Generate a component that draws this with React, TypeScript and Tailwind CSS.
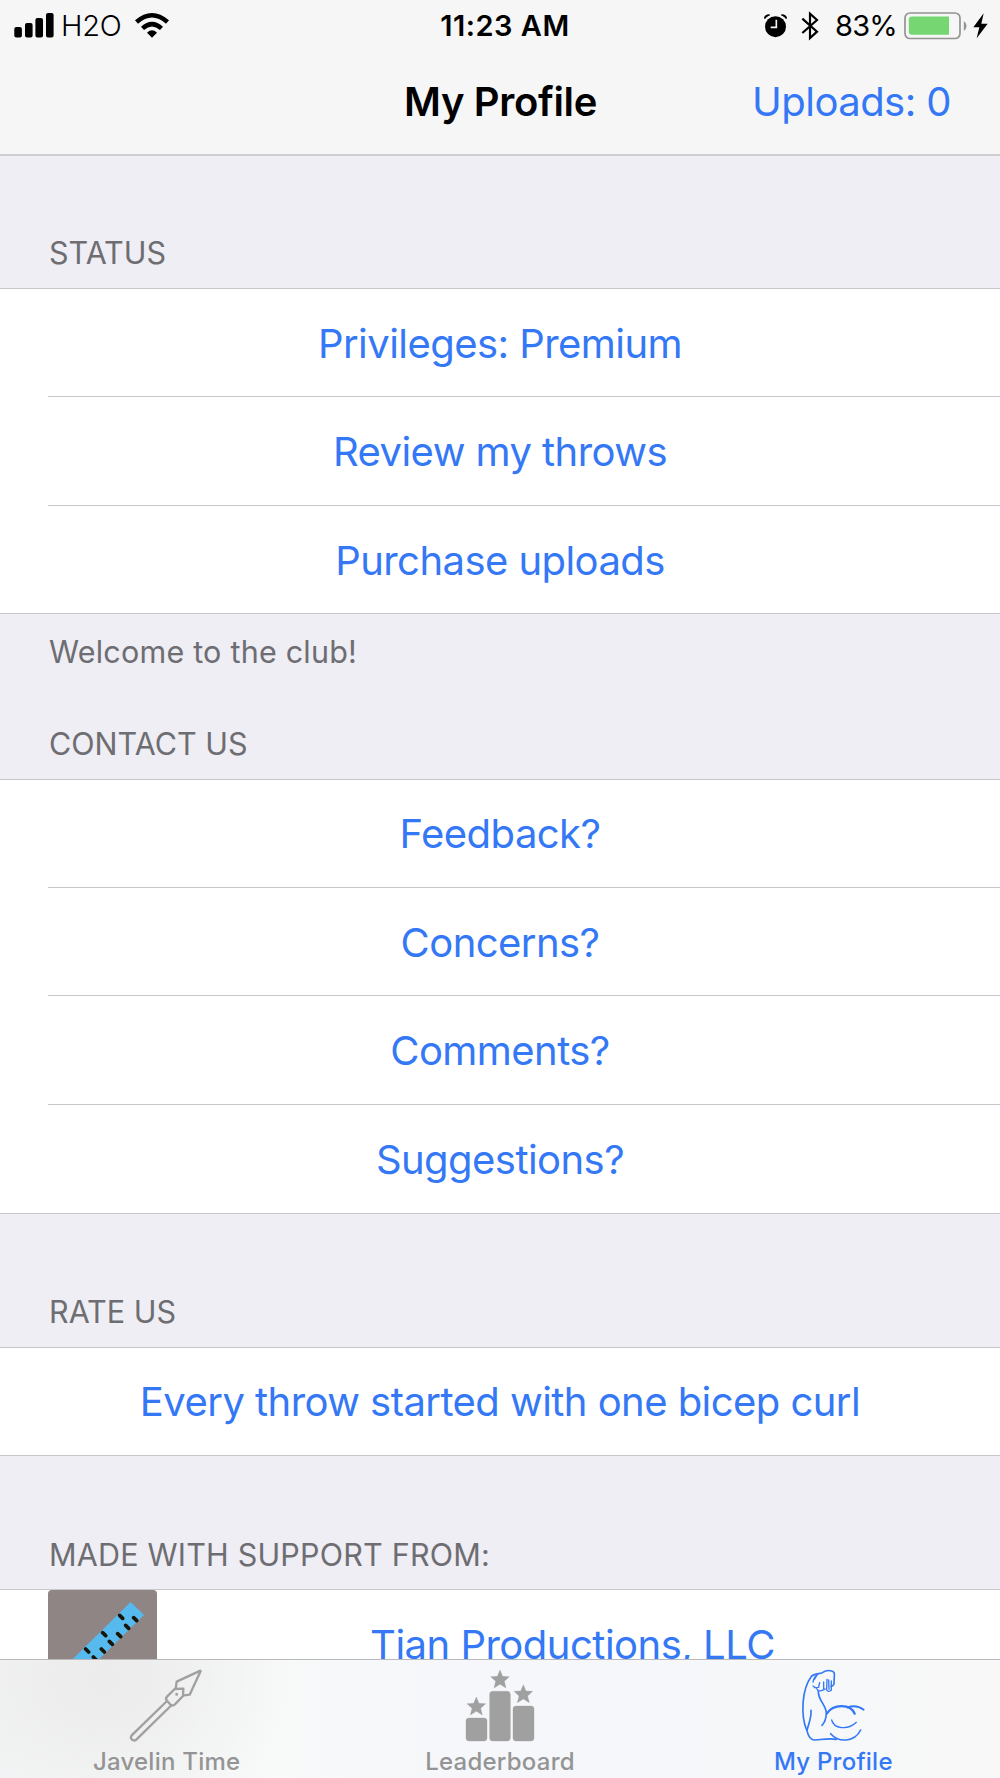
import { ReactNode } from 'react';
import { clsx } from 'clsx';

interface SectionProps {
  title: string;
  className?: string;
  footer?: string;
  children: ReactNode;
}

const Section = ({ title, className, footer, children }: SectionProps) => (
  <section>
    <h2
      className={clsx(
        'flex items-end pl-[49px] text-[30.5px] leading-10 text-[#6d6d72]',
        className,
      )}
    >
      {title}
    </h2>
    <ul className="border-y border-[#c8c7cc] bg-white">{children}</ul>
    {footer && (
      <p className="h-[76px] pl-[49px] pt-[18px] text-[30.5px] leading-10 tracking-[0.22px] text-[#6d6d72]">
        {footer}
      </p>
    )}
  </section>
);

const Row = ({ label, className }: { label: string; className?: string }) => (
  <li className="group pl-12">
    <button
      type="button"
      className={clsx(
        'flex w-full items-center justify-center border-[#c8c7cc] pr-12 text-[40px] tracking-[-0.55px] text-[#3478f6] group-not-last:border-b',
        className,
      )}
    >
      {label}
    </button>
  </li>
);

const SignalIcon = () => (
  <svg className="h-[25px] w-10" viewBox="0 0 40 25">
    <rect x="0.3" y="14" width="7.6" height="10.5" rx="2" />
    <rect x="11" y="10" width="7.6" height="14.5" rx="2" />
    <rect x="21.4" y="5" width="7.6" height="19.5" rx="2" />
    <rect x="32" y="0" width="7.6" height="24.5" rx="2" />
  </svg>
);

const WifiIcon = () => (
  <svg className="h-[25px] w-[34px]" viewBox="0 0 102 75">
    <path d="M0 22 Q51 -22 102 22 L93 32 Q51 -5 9 32 Z" />
    <path d="M18 41 Q51 11 84 41 L75 51 Q51 30 27 51 Z" />
    <path d="M36 59 Q51 45 66 59 L51 74 Z" />
  </svg>
);

const AlarmIcon = () => (
  <svg className="h-6 w-[23px]" viewBox="0 0 69 72">
    <circle cx="34.5" cy="38" r="31.5" />
    <path d="M2 14 Q4 2 17 3" fill="none" stroke="#000" strokeWidth="5" />
    <path d="M67 14 Q65 2 52 3" fill="none" stroke="#000" strokeWidth="5" />
    <path d="M2 14 Q4 2 17 3 Z M67 14 Q65 2 52 3 Z" />
    <path d="M37 17 V40 H20" fill="none" stroke="#f6f6f6" strokeWidth="5" />
  </svg>
);

const BluetoothIcon = () => (
  <svg className="h-[30px] w-[18px]" viewBox="0 0 54 90">
    <path
      d="M4 23 L48 62 L27 81 V8 L48 27 L4 66"
      fill="none"
      stroke="#000"
      strokeWidth="6.5"
    />
  </svg>
);

const BatteryIcon = () => (
  <svg className="h-[28px] w-[64px]" viewBox="0 0 64 28">
    <rect x="1" y="1" width="55" height="25.5" rx="5" fill="none" stroke="#939393" strokeWidth="1.7" />
    <path d="M8 4.6 H45 V22.8 H8 Q4.8 22.8 4.8 19.6 V7.8 Q4.8 4.6 8 4.6 Z" fill="#76d672" />
    <path d="M59.8 9 Q62.6 11 62.6 14 T59.8 19 Z" fill="#939393" />
  </svg>
);

const BoltIcon = () => (
  <svg className="h-[26px] w-[15px]" viewBox="0 0 45 78">
    <path d="M32 1 L1 43 H19 L11 76 L44 32 H25 Z" />
  </svg>
);

const JavelinIcon = () => (
  <svg
    className="h-[82px] w-20"
    viewBox="80 30 240 246"
    fill="none"
    stroke="#a0a0a0"
    strokeWidth="7"
    strokeLinejoin="round"
  >
    <path d="M302 61 L229 95 L226 117 M302 61 L268 134 L246 137" />
    <path d="M223 117 L249 116 L248 138 L223 164 Q215 170 208 161 L200 152 Q194 146 200 140 Z" />
    <path d="M200 153 L94 256 Q89 263 95 269 Q103 275 111 266 L214 165" />
    <circle cx="229" cy="133" r="2" strokeWidth="5" />
  </svg>
);

const STAR =
  'M0 -28 L8 -9 L28 -8 L13 6 L18 26 L0 15 L-18 26 L-13 6 L-28 -8 L-8 -9 Z';

const LeaderboardIcon = () => (
  <svg
    className="h-[82px] w-20"
    viewBox="120 30 240 246"
    fill="#a0a0a0"
    stroke="#a0a0a0"
    strokeLinejoin="round"
  >
    <rect x="138" y="204" width="63" height="69" rx="9" />
    <rect x="209" y="124" width="62" height="149" rx="9" />
    <rect x="279" y="168" width="63" height="105" rx="9" />
    <path d={STAR} transform="translate(169 169)" />
    <path d={STAR} transform="translate(240 88)" />
    <path d={STAR} transform="translate(310 132)" />
  </svg>
);

const BicepIcon = () => (
  <svg
    className="h-[82px] w-20"
    viewBox="100 30 240 246"
    fill="none"
    stroke="#3478f6"
    strokeWidth="4"
    strokeLinecap="round"
    strokeLinejoin="round"
  >
    <path
      d="M141 240 C124 200 124 120 156 78 C166 70 180 72 188 68 C198 61 207 60 216 63 Q226 66 224 77 L223 102 Q221 108 214 109"
      strokeWidth="5"
    />
    <path
      d="M154 181 C156 204 146 222 142 242 C146 262 156 271 168 270 C190 268 210 264 230 268"
      strokeWidth="5"
    />
    <path d="M174 74 Q164 78 160 96 M170 79 L164 88 M160 108 Q170 112 176 122 Q186 124 196 117 M164 113 L176 112 M180 98 L177 111 M192 96 V117 M202 88 L201 116 M207 90 L208 118 M215 93 V121 Q206 128 200 119" />
    <path d="M176 123 C174 150 200 165 200 190 Q199 214 187 226" strokeWidth="5" />
    <path d="M202 190 C220 162 272 160 285 191" strokeWidth="7" />
    <path d="M264 172 Q290 163 312 179" strokeWidth="5.5" />
    <path d="M216 210 C222 236 264 242 290 217" />
    <path d="M213 251 C236 278 284 278 303 240" strokeWidth="5" />
  </svg>
);

const RulerLogo = () => (
  <svg className="h-[109px] w-[109px] shrink-0 rounded" viewBox="145 210 327 327">
    <rect x="145" y="210" width="327" height="327" fill="#8f8585" />
    <path d="M393 246 L433 285 L178 536 L138 497 Z" fill="#56baee" />
    <path
      d="M360 286 l9 9 M309 338 l9 9 M258 387 l9 9 M402 293 l9 9 M378 316 l9 9 M354 341 l9 9 M329 364 l9 9 M305 387 l9 9 M281 411 l9 9"
      stroke="#1b1408"
      strokeWidth="11"
      strokeLinecap="round"
    />
  </svg>
);

const tabs = [
  { label: 'Javelin Time', icon: <JavelinIcon />, active: false },
  { label: 'Leaderboard', icon: <LeaderboardIcon />, active: false },
  { label: 'My Profile', icon: <BicepIcon />, active: true },
];

export default function App() {
  return (
    <div className="flex h-[1778px] w-[1000px] flex-col overflow-hidden bg-[#efeef4] font-['Inter',sans-serif]">
      <header className="h-[156px] shrink-0 border-b-2 border-[#cfcfd2] bg-[#f6f6f6]">
        <div className="grid h-[50px] grid-cols-3 items-center pl-[14px] pr-3 pt-px text-[29px]">
          <div className="flex items-center">
            <SignalIcon />
            <span className="ml-[7px] mr-[14px] font-light tracking-[-0.3px]">H2O</span>
            <WifiIcon />
          </div>
          <div className="pl-2 text-center font-semibold tracking-[0.5px]">11:23 AM</div>
          <div className="flex items-center justify-end">
            <AlarmIcon />
            <span className="ml-[14px] mr-4">
              <BluetoothIcon />
            </span>
            <span className="tracking-[-0.8px]">83%</span>
            <span className="ml-[7px] mr-[5px]">
              <BatteryIcon />
            </span>
            <BoltIcon />
          </div>
        </div>
        <div className="grid h-[103px] grid-cols-[1fr_auto_1fr] items-center pr-[49px] text-[40px]">
          <span />
          <h1 className="pl-[50px] font-semibold tracking-[-0.35px]">My Profile</h1>
          <button type="button" className="text-right tracking-[-0.55px] text-[#3478f6]">
            Uploads: 0
          </button>
        </div>
      </header>

      <main className="flex-1 overflow-hidden">
        <Section title="STATUS" className="h-[132px] pb-[15px]" footer="Welcome to the club!">
          <Row label="Privileges: Premium" className="h-[108px] pt-0.5" />
          <Row label="Review my throws" className="h-[109px] pt-0.5" />
          <Row label="Purchase uploads" className="h-[107px] pt-0.5" />
        </Section>
        <Section title="CONTACT US" className="h-[89px] pb-[15px]">
          <Row label="Feedback?" className="h-[108px]" />
          <Row label="Concerns?" className="h-[108px] pt-0.5" />
          <Row label="Comments?" className="h-[109px] pt-0.5" />
          <Row label="Suggestions?" className="h-[108px] pt-0.5" />
        </Section>
        <Section title="RATE US" className="h-[133px] pb-[15px]">
          <Row label="Every throw started with one bicep curl" className="h-[107px]" />
        </Section>
        <Section title="MADE WITH SUPPORT FROM:" className="h-[133px] pb-[14px] tracking-[0.2px]">
          <li className="flex items-center pl-12">
            <RulerLogo />
            <button
              type="button"
              className="flex-1 pr-3 text-[40px] tracking-[-0.5px] text-[#3478f6]"
            >
              Tian Productions, LLC
            </button>
          </li>
        </Section>
      </main>

      <nav className="grid h-[119px] shrink-0 grid-cols-3 border-t border-[#b9b9bb] bg-[radial-gradient(ellipse_190px_150px_at_105px_20px,#ebebeb,transparent),linear-gradient(to_right,#f3f4f5,#f8f9f9_28%,#f5f7fa_45%,#f5f7fa_65%,#f8f8f8)]">
        {tabs.map(({ label, icon, active }) => (
          <button
            key={label}
            type="button"
            className={clsx(
              'flex flex-col items-center text-2xl leading-[39px] font-medium tracking-[0.25px]',
              active ? 'text-[#3478f6]' : 'text-[#949494]',
            )}
          >
            {icon}
            {label}
          </button>
        ))}
      </nav>
    </div>
  );
}
